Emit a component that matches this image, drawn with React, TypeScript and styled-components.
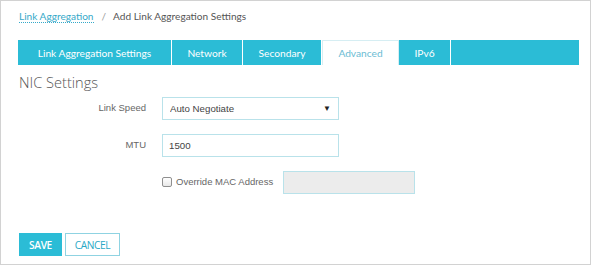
import styled, { createGlobalStyle } from 'styled-components'

const teal = '#2bbcd6'
const fieldBorder = '#b9e2ea'

const GlobalStyle = createGlobalStyle`
    body {
        margin: 0;
        background: #fff;
        font-family: "Liberation Sans", Arial, sans-serif;
    }
`

const Frame = styled.div`
    box-sizing: border-box;
    width: 591px;
    height: 265px;
    border: 1px solid #d2d2d2;
    padding: 7px 11px 0 17px;
    display: flex;
    flex-direction: column;
`

const Breadcrumb = styled.div`
    display: flex;
    align-items: center;
    height: 16px;
    font-family: Lato, "Open Sans", sans-serif;
    font-size: 10.1px;
    color: #555;
    & a {
        color: #35a9c9;
        text-decoration: none;
        border-bottom: 1px dotted #35a9c9;
        line-height: 12px;
        margin-left: 1px;
    }
    & .sep {
        color: #999;
        margin: 0 7px 0 8px;
    }
`

const TabBar = styled.nav`
    display: flex;
    height: 25px;
    margin-top: 16px;
    width: 561px;
    background: ${teal};
`

const Tab = styled.div`
    box-sizing: border-box;
    width: ${({ w }) => w}px;
    display: flex;
    align-items: center;
    justify-content: center;
    border-right: 1px solid #fff;
    font-family: Lato, "Open Sans", sans-serif;
    font-size: 10.2px;
    color: ${({ active }) => (active ? '#6bbcd3' : '#fff')};
    background: ${({ active }) => (active ? '#fff' : 'transparent')};
    ${({ active }) => active && `border: 1px solid #d6eef3; border-bottom: none;`}
`

const Heading = styled.h2`
    margin: 8px 0 0 1px;
    height: 18px;
    line-height: 18px;
    font-family: "Open Sans", sans-serif;
    font-weight: 300;
    font-size: 14.6px;
    color: #555;
`

const Form = styled.div`
    display: grid;
    grid-template-columns: 128px 177px;
    column-gap: 16px;
    row-gap: 14px;
    margin-top: 6px;
    align-items: center;
`

const Label = styled.label`
    justify-self: end;
    font-size: 9.5px;
    color: #666;
    margin-top: -3px;
`

const SelectWrap = styled.div`
    position: relative;
    height: 23px;
    & span {
        position: absolute;
        right: 8px;
        top: 7px;
        font-size: 8px;
        color: #222;
        pointer-events: none;
    }
`

const Select = styled.select`
    appearance: none;
    box-sizing: border-box;
    width: 100%;
    height: 23px;
    border: 1px solid ${fieldBorder};
    background: #fff;
    padding: 0 0 0 7px;
    font-family: "Liberation Sans", Arial, sans-serif;
    font-size: 9.7px;
    color: #444;
    outline: none;
`

const TextInput = styled.input`
    box-sizing: border-box;
    flex-shrink: 0;
    width: ${({ w }) => w || 177}px;
    height: 23px;
    border: 1px solid ${fieldBorder};
    background: ${({ disabled }) => (disabled ? '#ececec' : '#fff')};
    padding: 0 6px;
    font-family: "Liberation Sans", Arial, sans-serif;
    font-size: 9.7px;
    color: #444;
    outline: none;
`

const CheckRow = styled.div`
    grid-column: 2;
    display: flex;
    align-items: center;
    white-space: nowrap;
    font-size: 9.5px;
    color: #666;
`

const Check = styled.input`
    appearance: none;
    box-sizing: border-box;
    flex-shrink: 0;
    width: 10px;
    height: 10px;
    margin: -2px 4px 0 0;
    border: 1px solid #8f8f8f;
    border-radius: 2px;
    background: linear-gradient(#fff, #e8e8e8);
`

const CheckText = styled.span`
    margin-right: 10px;
    margin-top: -2px;
`

const Actions = styled.div`
    display: flex;
    gap: 3px;
    margin: 39px 0 0 1px;
`

const Button = styled.button`
    box-sizing: border-box;
    height: 23px;
    width: ${({ w }) => w}px;
    padding: 0;
    font-family: "Open Sans", sans-serif;
    font-size: 10.2px;
    font-weight: ${({ primary }) => (primary ? 600 : 400)};
    letter-spacing: -0.4px;
    text-transform: uppercase;
    color: ${({ primary }) => (primary ? '#fff' : '#2aa8c6')};
    background: ${({ primary }) => (primary ? teal : '#fff')};
    border: 1px solid ${({ primary }) => (primary ? teal : '#8fd3e2')};
`

const tabs = [
    { name: 'Link Aggregation Settings', w: 154 },
    { name: 'Network', w: 71 },
    { name: 'Secondary', w: 79 },
    { name: 'Advanced', w: 77, active: true },
    { name: 'IPv6', w: 52 },
]

export default function App() {
    return (
        <>
            <GlobalStyle />
            <Frame>
                <Breadcrumb>
                    <a href="#">Link Aggregation</a>
                    <span className="sep">/</span>
                    <span>Add Link Aggregation Settings</span>
                </Breadcrumb>
                <TabBar>
                    {tabs.map(t => (
                        <Tab key={t.name} w={t.w} active={t.active}>{t.name}</Tab>
                    ))}
                </TabBar>
                <Heading>NIC Settings</Heading>
                <Form>
                    <Label>Link Speed</Label>
                    <SelectWrap>
                        <Select defaultValue="auto">
                            <option value="auto">Auto Negotiate</option>
                        </Select>
                        <span>▼</span>
                    </SelectWrap>
                    <Label>MTU</Label>
                    <TextInput defaultValue="1500" />
                    <CheckRow>
                        <Check type="checkbox" />
                        <CheckText>Override MAC Address</CheckText>
                        <TextInput w={132} disabled />
                    </CheckRow>
                </Form>
                <Actions>
                    <Button primary w={43}>Save</Button>
                    <Button w={55}>Cancel</Button>
                </Actions>
            </Frame>
        </>
    )
}
